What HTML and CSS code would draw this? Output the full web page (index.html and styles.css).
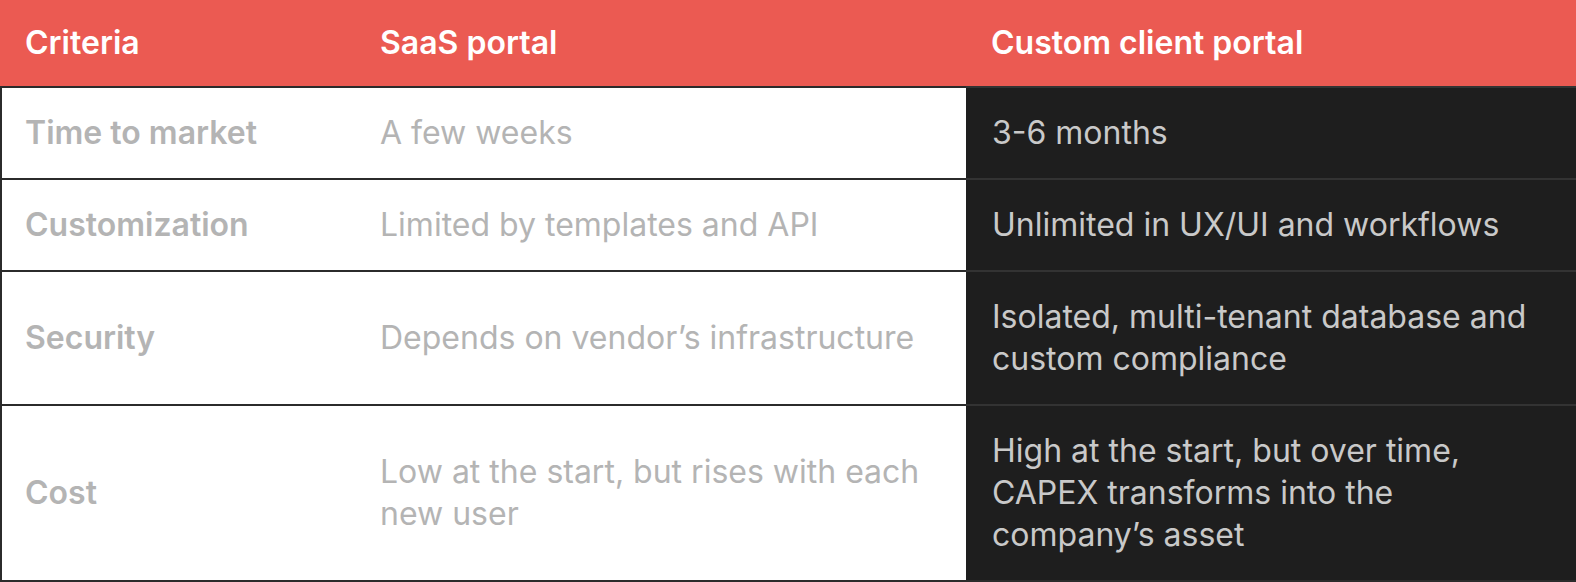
FILE: index.html
```html
<!DOCTYPE html>
<html lang="en">
<head>
  <meta charset="UTF-8">
  <meta name="viewport" content="width=device-width, initial-scale=1.0">
  <title>SaaS vs custom client portal</title>
  <link rel="stylesheet" href="styles.css">
</head>
<body>
  <table class="compare">
    <thead>
      <tr>
        <th class="col-criteria">Criteria</th>
        <th class="col-saas">SaaS portal</th>
        <th class="col-custom">Custom client portal</th>
      </tr>
    </thead>
    <tbody>
      <tr>
        <td class="criteria">Time to market</td>
        <td class="saas">A few weeks</td>
        <td class="custom">3-6 months</td>
      </tr>
      <tr>
        <td class="criteria">Customization</td>
        <td class="saas">Limited by templates and API</td>
        <td class="custom">Unlimited in UX/UI and workflows</td>
      </tr>
      <tr>
        <td class="criteria">Security</td>
        <td class="saas">Depends on vendor’s infrastructure</td>
        <td class="custom">Isolated, multi-tenant database and custom compliance</td>
      </tr>
      <tr>
        <td class="criteria">Cost</td>
        <td class="saas">Low at the start, but rises with each new user</td>
        <td class="custom">High at the start, but over time, CAPEX transforms into the company’s asset</td>
      </tr>
    </tbody>
  </table>
</body>
</html>
```

FILE: styles.css
```css
body {
  margin: 0;
  font-family: 'Inter', 'Liberation Sans', sans-serif;
  background: #fff;
}

.compare {
  width: 100%;
  border-collapse: separate;
  border-spacing: 0;
  table-layout: fixed;
  font-size: 32px;
  line-height: 42px;
}

.compare th,
.compare td {
  box-sizing: border-box;
  text-align: left;
  vertical-align: middle;
  padding: 24px 24px 24px 25px;
}

.col-criteria { width: 355px; }
.col-saas { width: 611px; }

/* header */
.compare thead th {
  background: #eb5a52;
  color: #fff;
  font-weight: 600;
  padding-top: 22px;
  padding-bottom: 22px;
}

/* body rows */
.compare tbody td {
  border-top: 2px solid #2b2b2b;
}

.compare tbody tr:last-child td {
  border-bottom: 2px solid #2b2b2b;
}

.criteria {
  border-left: 2px solid #2b2b2b;
  padding-left: 23px !important;
  color: #b4b4b4;
  font-weight: 600;
}

.saas {
  color: #b4b4b4;
}

.custom {
  background: #1e1e1e;
  color: #c9c9c9;
  padding-left: 26px !important;
}

.compare tbody td.custom {
  border-top-color: #333;
}
```
